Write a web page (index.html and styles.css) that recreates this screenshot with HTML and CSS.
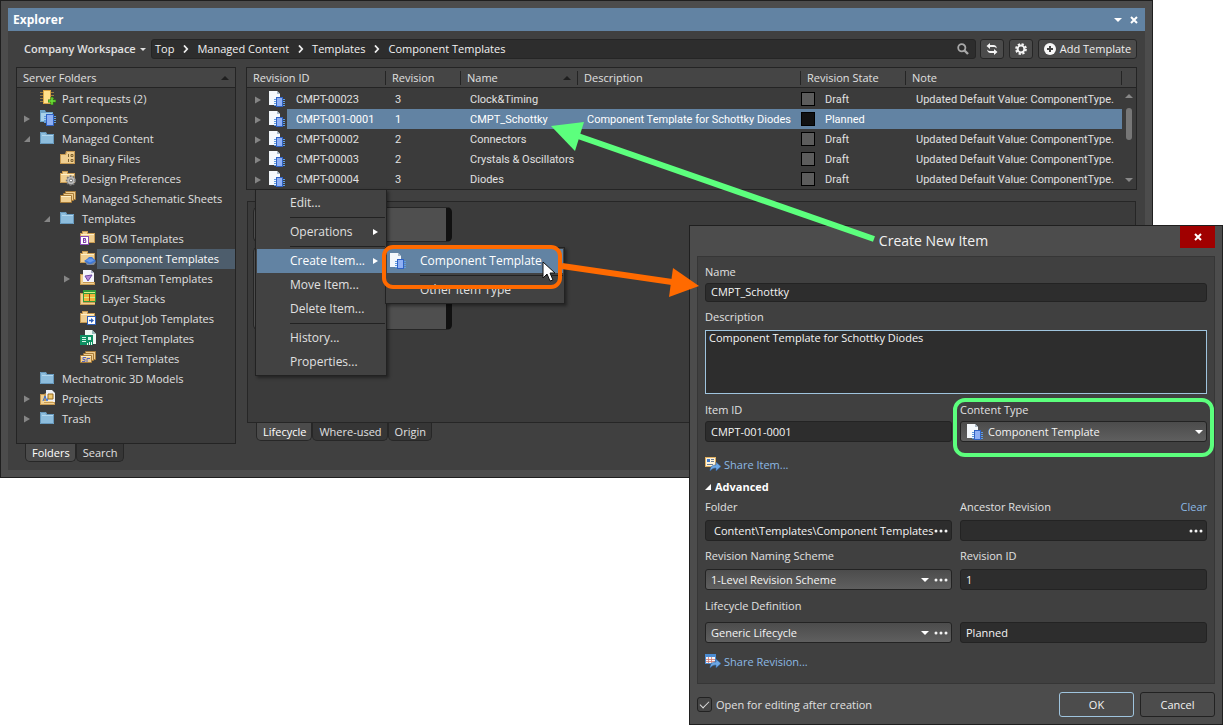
FILE: index.html
```html
<!DOCTYPE html>
<html lang="en">
<head>
<meta charset="utf-8">
<title>Explorer</title>
<link rel="stylesheet" href="styles.css">
</head>
<body>
<svg class="defs" aria-hidden="true">
  <symbol id="i-right" viewBox="0 0 6 8"><path d="M0 0.500 6 4 0 7.500z" fill="#858585"/></symbol>
  <symbol id="i-open" viewBox="0 0 6 6"><path d="M6 0v6H0z" fill="#858585"/></symbol>
  <symbol id="i-open-w" viewBox="0 0 6 6"><path d="M6 0v6H0z" fill="#fff"/></symbol>
  <symbol id="i-up" viewBox="0 0 8 4"><path d="M0 4 4 0 8 4z" fill="currentColor"/></symbol>
  <symbol id="i-down" viewBox="0 0 8 4"><path d="M0 0h8L4 4z" fill="currentColor"/></symbol>
  <symbol id="i-chev" viewBox="0 0 6 8"><path d="M1 .5 4.200 4 1 7.500" fill="none" stroke="#eee" stroke-width="1.800"/></symbol>
  <symbol id="i-x" viewBox="0 0 8 8"><path d="M1 1l6 6M7 1 1 7" stroke="#fff" stroke-width="2"/></symbol>
  <symbol id="i-item" viewBox="0 0 16 16">
    <path d="M0 0h8l3 3v11H0z" fill="#f4f8fc"/><path d="M8 0v3h3z" fill="#a9b9c8"/>
    <path d="M5 8.500h11M5 10.500h11M5 12.500h11M5 14.500h11" stroke="#5f9be0" stroke-width="1"/>
    <rect x="7.500" y="6.500" width="6" height="9" fill="#8fb0f4" stroke="#2f62c4"/>
  </symbol>
  <symbol id="i-folder" viewBox="0 0 16 16">
    <path d="M0 2h6l1 2h7v10H0z" fill="#8dbddd"/><path d="M.5 13.500v-11h5l1 2h7v9z" fill="none" stroke="#6698bc"/><path d="M2 5.500h11" stroke="#b4d8ee"/>
  </symbol>
  <symbol id="i-yfolder" viewBox="0 0 16 16">
    <path d="M2 1h6v2h7v10H0V3h2z" fill="#c79a52"/><path d="M1 4h2V2h4v2h7v8H1z" fill="#f0cf91"/><path d="M1 4.500h13" stroke="#fff0c8"/>
  </symbol>
  <symbol id="i-part" viewBox="0 0 16 16">
    <path d="M0 2.500h14M0 5.500h14M0 8.500h14M0 11.500h14" stroke="#9a7c40"/><rect x="3" y="0" width="8" height="14" fill="#d9a441"/><rect x="4" y="1" width="6" height="12" fill="#ffe08a"/>
    <path d="M12 7v8M8 11h8" stroke="#2d7d12" stroke-width="3"/><path d="M12 7.500v7M8.500 11h7" stroke="#6fe03a" stroke-width="1.500"/>
  </symbol>
  <symbol id="i-comps" viewBox="0 0 16 16">
    <path d="M0 0h5l1 2h7v10H0z" fill="#6fa4c8"/><path d="M1 3h11v8H1z" fill="#a9d2ea"/>
    <path d="M4 6.500h12M4 8.500h12M4 10.500h12M4 12.500h12" stroke="#5f9be0"/><rect x="6.500" y="4.500" width="7" height="11" fill="#8fb0f4" stroke="#2f62c4"/>
  </symbol>
  <symbol id="i-bin" viewBox="0 0 16 16">
    <path d="M6 1h9v13H0V4h5z" fill="#c79a52"/><path d="M7 2h7v11H1V5h5z" fill="#f0cf91"/><path d="M8.500 4v3M11 4.500h2v2h-2zM8.500 9v3M11 9.500h2v2h-2z" fill="none" stroke="#7d6230"/>
  </symbol>
  <symbol id="i-pref" viewBox="0 0 16 16">
    <use href="#i-yfolder"/><circle cx="11" cy="10.500" r="4.200" fill="#aaa" stroke="#777" stroke-dasharray="1.700 1.300" stroke-width="2"/><circle cx="11" cy="10.500" r="3.500" fill="#bcbcbc"/><circle cx="11" cy="10.500" r="1.500" fill="#fafafa" stroke="#666"/>
  </symbol>
  <symbol id="i-sheets" viewBox="0 0 16 16">
    <g fill="#f0cf91" stroke="#a87c38"><path d="M5.500 1.500h10v8h-10z"/><path d="M3.500 3.500h10v7h-10z"/><path d="M.5 5.500h11v7H.5z"/></g><path d="M1 6.500h10" stroke="#fff0c8"/>
  </symbol>
  <symbol id="i-bom" viewBox="0 0 16 16">
    <use href="#i-yfolder"/><rect x=".5" y="6.500" width="8" height="8" fill="#fff" stroke="#8a4bb4"/><path d="M3.500 8.500v4M3 8.500h2.500v1.700H3M3 12.500h2.800v-2.300" fill="none" stroke="#7a36a8"/>
  </symbol>
  <symbol id="i-ctpl" viewBox="0 0 16 16">
    <use href="#i-yfolder"/><path d="M5 12l2-2h7l2 2-2 3H7z" fill="#7d8794"/><path d="M4 11l3-2 2-2h3l2 2 2 2-3 2-2 1H9z" fill="#3f78d4"/><path d="M6 10.500 9 8.500h3l2 2-4 2z" fill="#6599ec"/>
  </symbol>
  <symbol id="i-draft" viewBox="0 0 16 16">
    <path d="M0 4h3v11H0zM0 12h15v3H0z" fill="#c79a52"/><path d="M1 5h2v8h11v1H1z" fill="#f0cf91"/><path d="M3 0h8l3 3v9H3z" fill="#f4f4fb"/><path d="M11 0v3h3z" fill="#a9b0c8"/><path d="M5 6l7-1-4 6z" fill="#b78ad8" stroke="#6a49a4"/>
  </symbol>
  <symbol id="i-layer" viewBox="0 0 16 16">
    <path d="M0 3h3v12H0zM0 12h15v3H0z" fill="#c79a52"/><path d="M1 4h2v9h12v1H1z" fill="#f0cf91"/><path d="M3 0h13v12H3z" fill="#2f9a3a"/><path d="M4 4h11v3H4zM4 8h11v3H4z" fill="#f2b43c"/><path d="M4 2.500h11M4 7.500h11" stroke="#d8f080"/><path d="M9.500 4v7" stroke="#a04a10"/>
  </symbol>
  <symbol id="i-out" viewBox="0 0 16 16">
    <use href="#i-yfolder"/><rect x="7.500" y="6.500" width="8" height="8" fill="#fff" stroke="#2d5fb8"/><path d="M9 10.500h3" stroke="#2d5fb8" stroke-width="1.500"/><path d="M11 8l3 2.500-3 2.500z" fill="#2d5fb8"/>
  </symbol>
  <symbol id="i-proj" viewBox="0 0 16 16">
    <path d="M5 0h7l4 4v10H5z" fill="#eef6f2"/><path d="M12 0v4h4z" fill="#9bb"/><path d="M0 5h13v10H0z" fill="#0e8f62"/><path d="M2 7.500h4M2 9.500h4M2 11.500h4" stroke="#d6f5e8"/><path d="M8 7h3v3H8z" fill="#d6f5e8"/><path d="M7.500 13v2M9.500 12v3M11.500 12v3" stroke="#eaf7f0"/>
  </symbol>
  <symbol id="i-sch" viewBox="0 0 16 16">
    <use href="#i-sheets"/><path d="M2 11.500h3v-2h-2v-2h3M7 12V8.500h3" fill="none" stroke="#5464c0"/>
  </symbol>
  <symbol id="i-projects" viewBox="0 0 16 16">
    <path d="M6 0h6l3 3v9H6z" fill="#eef0f4"/><path d="M0 4h4l2-1v9h9v3H0z" fill="#c79a52"/><path d="M1 5h3v8h10v1H1z" fill="#f0cf91"/><path d="M3 11l2-5 2 5 2-5" fill="none" stroke="#3a6fd0"/><path d="M8 4h5v5H8z" fill="#f2cb70" stroke="#9a6c20"/><path d="M3 11.500h10" stroke="#f5dba6"/>
  </symbol>
  <symbol id="i-share" viewBox="0 0 16 16">
    <path d="M0 0h11v10H0z" fill="#e0b060"/><path d="M1 1h9v8H1z" fill="#fdf3dc"/><path d="M2 2h3v3H2z" fill="#3f78c8"/><path d="M6 2.500h3M6 4.500h3M2 7.500h6" stroke="#6a7c94"/><path d="M5 14c0-4 2-6 6-6V5l5 4.500-5 4.500v-3c-3 0-4 1-6 3z" fill="#6fa8e4" stroke="#2f5f9c" stroke-width=".6"/>
  </symbol>
  <symbol id="i-sharer" viewBox="0 0 16 16">
    <path d="M0 0h11v10H0z" fill="#4a8ad0"/><path d="M1 3h9v6H1z" fill="#f4f6fa"/><path d="M1 5.500h9M1 7.500h9M3.500 3v6M6.500 3v6" stroke="#d07a70" stroke-width=".8"/><path d="M5 14c0-4 2-6 6-6V5l5 4.500-5 4.500v-3c-3 0-4 1-6 3z" fill="#6fa8e4" stroke="#2f5f9c" stroke-width=".6"/>
  </symbol>
  <symbol id="i-search" viewBox="0 0 12 12"><circle cx="4.800" cy="4.800" r="3.600" fill="none" stroke="#a8a8a8" stroke-width="1.800"/><path d="M7.500 7.500 11 11" stroke="#a8a8a8" stroke-width="2.400"/></symbol>
  <symbol id="i-sync" viewBox="0 0 12 12"><path d="M4 0 .5 3 4 6V4h3.500c1.500 0 2.500.5 3.300 1.500C10.800 3.500 9.500 2 7.500 2H4zM8 6l3.500 3L8 12v-2H4.500C2.500 10 1.200 8.500 1.200 6.500 2 7.500 3 8 4.500 8H8z" fill="#f4f4f4"/></symbol>
  <symbol id="i-gear" viewBox="0 0 12 12"><circle cx="6" cy="6" r="4.800" fill="none" stroke="#f4f4f4" stroke-width="2.200" stroke-dasharray="2.200 1.570"/><circle cx="6" cy="6" r="3.400" fill="none" stroke="#f4f4f4" stroke-width="2"/></symbol>
  <symbol id="i-plus" viewBox="0 0 12 12"><circle cx="6" cy="6" r="6" fill="#f8f8f8"/><path d="M6 3v6M3 6h6" stroke="#444" stroke-width="2"/></symbol>
  <symbol id="i-dots" viewBox="0 0 14 4"><circle cx="2" cy="2" r="1.500" fill="#f4f4f4"/><circle cx="7" cy="2" r="1.500" fill="#f4f4f4"/><circle cx="12" cy="2" r="1.500" fill="#f4f4f4"/></symbol>
</svg>

<main class="stage">
  <section class="explorer" aria-label="Explorer">
    <header class="titlebar">
      <h1>Explorer</h1>
      <button class="plain" aria-label="Menu"><svg class="tri"><use href="#i-down"/></svg></button>
      <button class="plain" aria-label="Close"><svg class="ex"><use href="#i-x"/></svg></button>
    </header>
    <div class="toolbar">
      <button class="plain workspace">Company Workspace <svg class="caret"><use href="#i-down"/></svg></button>
      <nav class="crumbs" aria-label="Path">
        <a href="#">Top</a><svg class="chev"><use href="#i-chev"/></svg>
        <a href="#">Managed Content</a><svg class="chev"><use href="#i-chev"/></svg>
        <a href="#">Templates</a><svg class="chev"><use href="#i-chev"/></svg>
        <a href="#">Component Templates</a>
        <button class="plain find" aria-label="Search"><svg class="i12"><use href="#i-search"/></svg></button>
      </nav>
      <button class="tool" aria-label="Refresh"><svg class="i12"><use href="#i-sync"/></svg></button>
      <button class="tool" aria-label="Settings"><svg class="i12"><use href="#i-gear"/></svg></button>
      <button class="tool add"><svg class="i12"><use href="#i-plus"/></svg>Add Template</button>
    </div>
    <div class="body">
      <aside class="side">
        <div class="folders">
          <div class="head"><span>Server Folders</span><svg class="sort"><use href="#i-up"/></svg></div>
          <ul class="tree">
            <li class="node"><span class="exp"></span><svg class="i16"><use href="#i-part"/></svg><span class="label">Part requests (2)</span></li>
            <li class="node"><span class="exp"><svg class="right"><use href="#i-right"/></svg></span><svg class="i16"><use href="#i-comps"/></svg><span class="label">Components</span></li>
            <li class="node"><span class="exp"><svg class="open"><use href="#i-open"/></svg></span><svg class="i16"><use href="#i-folder"/></svg><span class="label">Managed Content</span></li>
            <li class="node l1"><span class="exp"></span><svg class="i16"><use href="#i-bin"/></svg><span class="label">Binary Files</span></li>
            <li class="node l1"><span class="exp"></span><svg class="i16"><use href="#i-pref"/></svg><span class="label">Design Preferences</span></li>
            <li class="node l1"><span class="exp"></span><svg class="i16"><use href="#i-sheets"/></svg><span class="label">Managed Schematic Sheets</span></li>
            <li class="node l1"><span class="exp"><svg class="open"><use href="#i-open"/></svg></span><svg class="i16"><use href="#i-folder"/></svg><span class="label">Templates</span></li>
            <li class="node l2"><span class="exp"></span><svg class="i16"><use href="#i-bom"/></svg><span class="label">BOM Templates</span></li>
            <li class="node l2 on"><span class="exp"></span><svg class="i16"><use href="#i-ctpl"/></svg><span class="label">Component Templates</span></li>
            <li class="node l2"><span class="exp"><svg class="right"><use href="#i-right"/></svg></span><svg class="i16"><use href="#i-draft"/></svg><span class="label">Draftsman Templates</span></li>
            <li class="node l2"><span class="exp"></span><svg class="i16"><use href="#i-layer"/></svg><span class="label">Layer Stacks</span></li>
            <li class="node l2"><span class="exp"></span><svg class="i16"><use href="#i-out"/></svg><span class="label">Output Job Templates</span></li>
            <li class="node l2"><span class="exp"></span><svg class="i16"><use href="#i-proj"/></svg><span class="label">Project Templates</span></li>
            <li class="node l2"><span class="exp"></span><svg class="i16"><use href="#i-sch"/></svg><span class="label">SCH Templates</span></li>
            <li class="node"><span class="exp"></span><svg class="i16"><use href="#i-folder"/></svg><span class="label">Mechatronic 3D Models</span></li>
            <li class="node"><span class="exp"><svg class="right"><use href="#i-right"/></svg></span><svg class="i16"><use href="#i-projects"/></svg><span class="label">Projects</span></li>
            <li class="node"><span class="exp"><svg class="right"><use href="#i-right"/></svg></span><svg class="i16"><use href="#i-folder"/></svg><span class="label">Trash</span></li>
          </ul>
        </div>
        <div class="tabs"><button class="tab on">Folders</button><button class="tab">Search</button></div>
      </aside>
      <div class="content">
        <table class="items">
          <colgroup><col class="c-icon"><col class="c-id"><col class="c-rev"><col class="c-name"><col class="c-desc"><col class="c-state"><col><col class="c-bar"></colgroup>
          <thead><tr><th colspan="2"><span>Revision ID</span></th><th><span>Revision</span></th><th><span>Name<svg class="sort"><use href="#i-up"/></svg></span></th><th><span>Description</span></th><th><span>Revision State</span></th><th><span>Note</span></th><td></td></tr></thead>
          <tbody>
            <tr><td class="ic"><svg class="right"><use href="#i-right"/></svg><svg class="i16"><use href="#i-item"/></svg></td><td>CMPT-00023</td><td>3</td><td>Clock&amp;Timing</td><td></td><td class="st"><i class="box"></i>Draft</td><td class="note">Updated Default Value: ComponentType.</td>
              <td class="bar" rowspan="5"><div class="scroll"><svg class="sa"><use href="#i-up"/></svg><div class="track"><div class="thumb"></div></div><svg class="sa"><use href="#i-down"/></svg></div></td></tr>
            <tr class="on"><td class="ic"><svg class="right"><use href="#i-right"/></svg><svg class="i16"><use href="#i-item"/></svg></td><td>CMPT-001-0001</td><td>1</td><td>CMPT_Schottky</td><td>Component Template for Schottky Diodes</td><td class="st"><i class="box dark"></i>Planned</td><td></td></tr>
            <tr><td class="ic"><svg class="right"><use href="#i-right"/></svg><svg class="i16"><use href="#i-item"/></svg></td><td>CMPT-00002</td><td>2</td><td>Connectors</td><td></td><td class="st"><i class="box"></i>Draft</td><td class="note">Updated Default Value: ComponentType.</td></tr>
            <tr><td class="ic"><svg class="right"><use href="#i-right"/></svg><svg class="i16"><use href="#i-item"/></svg></td><td>CMPT-00003</td><td>2</td><td>Crystals &amp; Oscillators</td><td></td><td class="st"><i class="box"></i>Draft</td><td class="note">Updated Default Value: ComponentType.</td></tr>
            <tr><td class="ic"><svg class="right"><use href="#i-right"/></svg><svg class="i16"><use href="#i-item"/></svg></td><td>CMPT-00004</td><td>3</td><td>Diodes</td><td></td><td class="st"><i class="box"></i>Draft</td><td class="note">Updated Default Value: ComponentType.</td></tr>
          </tbody>
        </table>
        <div class="detail"><div class="stagebox"></div><div class="stagebox tall"></div></div>
        <div class="tabs lower"><button class="tab on">Lifecycle</button><button class="tab">Where-used</button><button class="tab">Origin</button></div>
      </div>
    </div>
  </section>

  <div class="menu main-menu" role="menu">
    <button role="menuitem">Edit...</button><hr>
    <button role="menuitem">Operations<svg class="sub"><use href="#i-right"/></svg></button><hr>
    <button role="menuitem" class="on">Create Item...<svg class="sub"><use href="#i-right"/></svg></button>
    <button role="menuitem">Move Item...</button>
    <button role="menuitem">Delete Item...</button><hr>
    <button role="menuitem">History...</button>
    <button role="menuitem">Properties...</button>
  </div>
  <div class="menu sub-menu" role="menu">
    <button role="menuitem" class="on"><svg class="i16"><use href="#i-item"/></svg>Component Template</button><hr>
    <button role="menuitem">Other Item Type</button>
  </div>

  <form class="dialog" aria-label="Create New Item">
    <header class="dlg-head"><h2>Create New Item</h2><button type="button" class="close" aria-label="Close"><svg class="ex"><use href="#i-x"/></svg></button></header>
    <div class="panel">
      <label for="name">Name</label>
      <input id="name" class="field slim" value="CMPT_Schottky">
      <label for="desc" class="desc-label">Description</label>
      <textarea id="desc">Component Template for Schottky Diodes</textarea>
      <div class="pair first">
        <div><label for="item">Item ID</label><input id="item" class="field" value="CMPT-001-0001"></div>
        <div><label for="type">Content Type</label>
          <div class="field combo typed"><svg class="i16"><use href="#i-item"/></svg><select id="type"><option>Component Template</option></select><svg class="drop"><use href="#i-down"/></svg></div></div>
      </div>
      <a class="share" href="#"><svg class="i16"><use href="#i-share"/></svg>Share Item...</a>
      <button type="button" class="plain advanced"><svg class="open"><use href="#i-open-w"/></svg>Advanced</button>
      <div class="pair">
        <div><label for="folder">Folder</label><div class="field group"><input id="folder" value="Content\Templates\Component Templates"><button type="button" class="plain" aria-label="Browse folder"><svg class="dots"><use href="#i-dots"/></svg></button></div></div>
        <div><div class="split"><label for="anc">Ancestor Revision</label><a href="#">Clear</a></div><div class="field group"><input id="anc"><button type="button" class="plain" aria-label="Browse revision"><svg class="dots"><use href="#i-dots"/></svg></button></div></div>
      </div>
      <div class="pair naming">
        <div><label for="scheme">Revision Naming Scheme</label><div class="field combo"><select id="scheme"><option>1-Level Revision Scheme</option></select><svg class="drop"><use href="#i-down"/></svg><button type="button" class="plain" aria-label="Edit scheme"><svg class="dots"><use href="#i-dots"/></svg></button></div></div>
        <div><label for="rev">Revision ID</label><input id="rev" class="field" value="1"></div>
      </div>
      <div class="pair life">
        <div><label for="life">Lifecycle Definition</label><div class="field combo"><select id="life"><option>Generic Lifecycle</option></select><svg class="drop"><use href="#i-down"/></svg><button type="button" class="plain" aria-label="Edit lifecycle"><svg class="dots"><use href="#i-dots"/></svg></button></div></div>
        <div><input class="field" aria-label="Lifecycle state" value="Planned"></div>
      </div>
      <a class="share last" href="#"><svg class="i16"><use href="#i-sharer"/></svg>Share Revision...</a>
    </div>
    <footer class="dlg-foot">
      <label class="check"><input type="checkbox" checked>Open for editing after creation</label>
      <button type="button" class="btn ok">OK</button><button type="button" class="btn">Cancel</button>
    </footer>
  </form>

  <svg class="notes" width="1223" height="725" viewBox="0 0 1223 725" aria-hidden="true">
    <path d="M578 136 874 239" stroke="#5cff7d" stroke-width="6"/><path d="M551 126 584 122 575 151z" fill="#5cff7d"/>
    <rect x="955" y="400" width="257" height="55" rx="10" fill="none" stroke="#5cff7d" stroke-width="4"/>
    <path d="M562 266 672 282" stroke="#ff6a00" stroke-width="6"/><path d="M699 286 673 268 669 297z" fill="#ff6a00"/>
    <rect x="384" y="247" width="176" height="40" rx="9" fill="none" stroke="#ff6a00" stroke-width="4"/>
    <path d="M543 262v16l4-4 3 7 3-1-3-7h5z" fill="#fff" stroke="#111"/>
  </svg>
</main>
</body>
</html>
```
FILE: styles.css
```css
* { box-sizing: border-box; }
body { margin: 0; background: #fff; color: #e0e0e0; font: 11px/16px "Open Sans", "Noto Sans", sans-serif; }
h1, h2, ul { margin: 0; padding: 0; }
button, input, select, textarea { font: inherit; color: inherit; }
a { color: inherit; text-decoration: none; }
svg { display: block; flex: none; }
.defs { position: absolute; width: 0; height: 0; }
.plain { background: none; border: 0; padding: 0; }
.i16 { width: 16px; height: 16px; }
.i12 { width: 12px; height: 12px; }
.right { width: 6px; height: 8px; }
.open { width: 6px; height: 6px; }
.ex { width: 8px; height: 8px; }
.stage { position: relative; min-height: 100vh; }

.explorer { margin-right: 70px; min-height: 478px; border: 1px solid #1f1f1f; background: #404040; box-shadow: inset 0 0 0 7px #4c4c4c; padding: 7px; display: flex; flex-direction: column; }
.titlebar { display: flex; align-items: center; gap: 8px; height: 23px; padding: 0 7px 0 5px; background: #6283a3; color: #fff; }
.titlebar h1 { flex: 1; font-size: 12px; font-weight: 700; }
.tri { width: 8px; height: 4px; }
.toolbar { display: flex; align-items: center; gap: 4px; padding: 8px 8px 8px 16px; }
.workspace { display: flex; align-items: center; gap: 4px; width: 123px; font-weight: 600; white-space: nowrap; }
.caret { width: 6px; height: 3px; }
.crumbs { flex: 1; display: flex; align-items: center; height: 20px; padding: 0 6px 0 3px; background: #2d2d2d; border: 1px solid #252525; border-radius: 3px; color: #f2f2f2; }
.chev { width: 6px; height: 8px; margin: 0 8px 0 9px; }
.find { margin-left: auto; }
.tool { display: flex; align-items: center; justify-content: center; gap: 4px; width: 24px; height: 20px; padding: 0; background: #4b4b4b; border: 1px solid #262626; border-radius: 3px; color: #f0f0f0; white-space: nowrap; }
.tool + .tool { margin-left: 1px; }
.tool.add { width: 99px; }
.body { flex: 1; display: flex; gap: 10px; padding: 0 8px; }
.side { width: 220px; display: flex; flex-direction: column; }
.folders { height: 377px; border: 1px solid #242424; background: #3b3b3b; }
.head { display: flex; justify-content: space-between; align-items: center; height: 20px; padding: 0 6px; background: #454545; border-bottom: 1px solid #242424; }
.sort { width: 8px; height: 4px; color: #1f1f1f; }
.tree { list-style: none; padding-top: 1px; }
.node { display: flex; align-items: center; height: 20px; padding-left: 7px; white-space: nowrap; }
.node.l1 { padding-left: 27px; }
.node.l2 { padding-left: 47px; }
.exp { width: 16px; }
.node .i16 { margin-top: -2px; }
.label { flex: 1; margin-left: 1px; padding-left: 5px; line-height: 20px; }
.node.on .label { background: #4d5d6c; color: #fff; }
.tabs { display: flex; padding-left: 9px; }
.tabs.lower { padding-left: 10px; }
.tab { height: 18px; padding: 0 5px 0 6px; line-height: 16px; background: #363636; border: 1px solid #272727; border-top: 0; border-radius: 0 0 5px 5px; }
.tab.on { background: #4b4b4b; color: #fff; }
.content { flex: 1; min-width: 0; }

.items { width: 100%; table-layout: fixed; border-collapse: separate; border-spacing: 0; border: 1px solid #242424; background: #3b3b3b; }
.c-icon { width: 40px; } .c-id { width: 99px; } .c-rev { width: 75px; } .c-name { width: 117px; } .c-desc { width: 223px; } .c-state { width: 105px; } .c-bar { width: 14px; }
.items thead th, .items thead td { height: 20px; padding: 0; background: #454545; border-bottom: 1px solid #242424; text-align: left; font-weight: 400; }
.items th span { display: flex; justify-content: space-between; align-items: center; height: 14px; line-height: 14px; padding: 0 6px; border-right: 1px solid #242424; }
.items tbody td { height: 20px; padding: 1px 0 0 9px; font: 11px/19px Roboto, "Liberation Sans", sans-serif; white-space: nowrap; }
.items tbody tr.on td:not(.ic) { background: #6283a3; color: #fff; }
.items tbody tr:first-child td:not(.bar) { height: 21px; padding-top: 2px; }
.items tbody td.ic { padding-left: 8px; }
.ic svg { display: inline-block; vertical-align: middle; }
.ic .i16 { margin: -2px 0 0 8px; }
.items tbody td.st { padding-left: 0; }
.items tbody td.note { padding-left: 10px; }
.box { display: inline-block; width: 14px; height: 14px; margin: -2px 10px 0 0; vertical-align: middle; background: #5c5c5c; border: 1px solid #000; }
.box.dark { background: #111; }
.items tbody td.bar { padding: 0; vertical-align: top; }
.scroll { display: flex; flex-direction: column; align-items: center; gap: 10px; height: 100px; padding: 6px 0; color: #888; }
.sa { width: 8px; height: 4px; }
.track { flex: 1; }
.thumb { width: 6px; height: 32px; border-radius: 3px; background: #777; }
.detail { height: 222px; margin: 11px 1px 0; padding: 5px; border: 1px solid #262626; background: #3b3b3b; }
.stagebox { width: 199px; height: 35px; background: #4f4f4f; border: 1px solid #262626; border-right: 6px solid #111; border-radius: 5px; }
.stagebox.tall { height: 83px; margin-top: 5px; }

.menu { position: absolute; border: 1px solid #222; background: #424242; padding: 1px; box-shadow: 2px 2px 3px rgba(0, 0, 0, .4); font-size: 12px; }
.main-menu { left: 255px; top: 189px; width: 132px; }
.sub-menu { left: 385px; top: 247px; width: 180px; }
.menu button { display: flex; align-items: center; width: 100%; height: 24px; padding: 0 7px 0 33px; background: none; border: 0; white-space: nowrap; }
.menu button.on { background: #6283a3; color: #fff; }
.menu hr { height: 1px; margin: 2px 0 2px 33px; border: 0; background: #222; }
.sub { width: 5px; height: 8px; margin-left: auto; filter: brightness(2); }
.sub-menu button .i16 { margin: 0 14px 0 -30px; }

.dialog { position: absolute; right: 0; top: 225px; width: 534px; min-height: 500px; border: 1px solid #1f1f1f; background: #4c4c4c; padding: 0 7px; }
.dlg-head { display: grid; grid-template-columns: 1fr 35px; height: 30px; }
.dlg-head h2 { padding-right: 10px; text-align: center; font-size: 14px; line-height: 30px; font-weight: 400; color: #f2f2f2; }
.close { display: grid; place-items: center; height: 22px; padding: 0; border: 0; background: #a00000; }
.panel { height: 428px; padding: 6px 7px; border: 1px solid #363636; background: #404040; }
.panel label { display: block; line-height: 18px; }
.field { display: block; width: 100%; height: 21px; padding: 0 5px; background: #2d2d2d; border: 1px solid #232323; border-radius: 3px; color: #f4f4f4; }
.field.slim { height: 19px; margin-top: 2px; padding-bottom: 2px; }
.panel .desc-label { margin-top: 6px; }
textarea { display: block; width: 100%; height: 64px; margin-top: 4px; padding: 0 3px; border: 1px solid #9fc4de; border-radius: 0; background: #2d2d2d; color: #f4f4f4; line-height: 14px; resize: none; outline: 0; }
.pair { display: grid; grid-template-columns: 1fr 1fr; gap: 8px; align-items: end; }
.pair .field { margin-top: 4px; }
.pair.first { margin-top: 7px; }
.pair.first .field { margin-top: 2px; }
.pair.naming { margin-top: 6px; }
.pair.naming .field { margin-top: 4px; }
.pair.life { margin-top: 7px; }
.pair.life .field { margin-top: 7px; }
.combo, .group { display: flex; align-items: center; gap: 5px; }
.combo { background: linear-gradient(#4c4c4c, #5f5f5f); padding-right: 3px; }
.combo.typed { padding-left: 6px; }
.combo select { flex: 1; min-width: 0; appearance: none; background: none; border: 0; padding: 0; outline: 0; }
.drop { width: 8px; height: 4px; color: #fff; }
.group { padding: 0 3px 0 8px; gap: 0; }
.group input { flex: 1; min-width: 0; background: none; border: 0; padding: 0; outline: 0; }
.dots { width: 14px; height: 4px; }
.share, .split a { color: #8cb9e4; }
.share { display: flex; align-items: center; gap: 3px; margin-top: 14px; line-height: 18px; }
.share.last { margin-top: 10px; }
.advanced { display: flex; align-items: center; gap: 4px; margin: 5px 0 3px; font-weight: 700; color: #fff; line-height: 16px; }
.split { display: flex; justify-content: space-between; line-height: 18px; }
.dlg-foot { display: flex; align-items: center; gap: 6px; padding-top: 8px; }
.check { flex: 1; display: flex; align-items: center; gap: 4px; }
.check input { appearance: none; display: grid; place-items: center; width: 15px; height: 15px; margin: 0; background: #454545; border: 1px solid #222; border-radius: 3px; }
.check input:checked::after { content: ""; width: 8px; height: 4px; margin-top: -3px; border: solid #ddd; border-width: 0 0 1px 1px; transform: rotate(-45deg); }
.btn { width: 75px; height: 25px; padding: 0; background: #4c4c4c; border: 1px solid #222; border-radius: 3px; color: #f2f2f2; }
.btn.ok { border-color: #9fc4de; }
.notes { position: absolute; left: 0; top: 0; pointer-events: none; }
```
